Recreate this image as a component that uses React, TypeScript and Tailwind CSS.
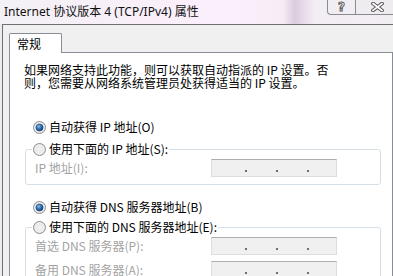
import React from "react";

function Radio({ checked }: { checked?: boolean }) {
  return (
    <svg width="13" height="13" viewBox="0 0 13 13" className="shrink-0">
      <defs>
        <radialGradient id="rbg" cx="0.5" cy="0.5" r="0.6">
          <stop offset="0" stopColor="#f4f4f4" />
          <stop offset="0.6" stopColor="#e6e6e6" />
          <stop offset="1" stopColor="#cfcfcf" />
        </radialGradient>
        <radialGradient id="rdot" cx="0.4" cy="0.35" r="0.7">
          <stop offset="0" stopColor="#8fc2ee" />
          <stop offset="0.5" stopColor="#2f6fb3" />
          <stop offset="1" stopColor="#123c6e" />
        </radialGradient>
      </defs>
      <circle cx="6.5" cy="6.5" r="6" fill="url(#rbg)" stroke="#8e9196" strokeWidth="1" />
      <circle cx="6.5" cy="6.5" r="4.5" fill="none" stroke="#ffffff" strokeOpacity="0.6" strokeWidth="1" />
      {checked && <circle cx="6.5" cy="6.5" r="3.6" fill="url(#rdot)" stroke="#1c4474" strokeWidth="0.6" />}
    </svg>
  );
}

function IpBox({ className = "" }: { className?: string }) {
  return (
    <div
      className={
        "w-[126px] h-[18px] shrink-0 bg-[#f0f0f0] border border-[#dadde2] border-t-[#abadb3] flex items-end pb-[4px] pl-[33px] gap-[29px] " +
        className
      }
    >
      <span className="w-[2px] h-[2px] bg-[#6f6f6f]" />
      <span className="w-[2px] h-[2px] bg-[#6f6f6f]" />
      <span className="w-[2px] h-[2px] bg-[#6f6f6f]" />
    </div>
  );
}

export default function App() {
  return (
    <div className="w-[393px] h-[276px] overflow-hidden bg-[#ecebf0] flex flex-col font-['Noto_Sans','Noto_Sans_CJK_SC',sans-serif]">
      {/* Title bar */}
      <div className="h-[24px] shrink-0 flex items-start bg-[linear-gradient(to_right,#f3f1f5_0%,#f8eff9_30%,#fbeffb_60%,#f6ecf6_72%,#dccbdd_75%,#e6d9e7_77%,#f3edf4_80%,#f1eef2_100%)]">
        <div className="h-[23px] pl-[4px] flex items-center text-[12px] text-[#111] whitespace-nowrap font-['Noto_Sans','Noto_Sans_CJK_SC',sans-serif]">
          Internet 协议版本 4 (TCP/IPv4) 属性
        </div>
        <div className="ml-auto mr-[-5px] flex shrink-0">
          <div className="w-[28px] h-[15px] shrink-0 border border-t-0 border-r-0 border-[#8b8a93] rounded-bl-[4px] bg-[#f0eef2] flex items-center justify-center">
            <span className="text-[12px] leading-[12px] font-bold text-white [-webkit-text-stroke:1px_#5b5b5b] font-['DejaVu_Sans',sans-serif]">
              ?
            </span>
          </div>
          <div className="w-[43px] h-[15px] shrink-0 border-l border-b border-[#8b8a93] bg-[#eeecef] flex items-center justify-center">
            <svg width="13" height="10" viewBox="0 0 13 10">
              <path d="M2 1.5 L11 8.5 M11 1.5 L2 8.5" stroke="#5a5a5a" strokeWidth="3.6" strokeLinecap="square" />
              <path d="M2 1.5 L11 8.5 M11 1.5 L2 8.5" stroke="#ffffff" strokeWidth="1.6" strokeLinecap="square" />
            </svg>
          </div>
        </div>
      </div>

      {/* Body */}
      <div className="flex-1 ml-[2px] border-t border-l border-[#6f6f74] bg-[#f0f0f0] pl-[6px] pt-[8px] flex flex-col font-['Noto_Sans_CJK_SC',sans-serif] text-[12px] text-black">
        {/* Tab */}
        <div className="relative z-10 -mb-px w-[53px] h-[20px] bg-white border border-b-0 border-[#898c95] rounded-t-[2px] flex items-center pl-[7px] leading-[12px]">
          常规
        </div>
        {/* Panel */}
        <div className="flex-1 w-[384px] bg-white border border-[#898c95] flex flex-col">
          <p className="pl-[14px] pt-[10px] leading-[13px] whitespace-nowrap">
            如果网络支持此功能，则可以获取自动指派的 IP 设置。否
            <br />
            则，您需要从网络系统管理员处获得适当的 IP 设置。
          </p>

          <div className="mt-[30px] h-[16px] pl-[23px] flex items-center gap-[3px] leading-[12px]">
            <Radio checked />
            <span>自动获得 IP 地址(O)</span>
          </div>

          <fieldset className="mt-[6px] ml-[15px] w-[356px] border border-[#d5dfe5] rounded-[3px] px-[6px]">
            <legend className="h-[16px] px-[1px] flex items-center gap-[3px] leading-[12px]">
              <Radio />
              <span>使用下面的 IP 地址(S):</span>
            </legend>
            <div className="mt-[2px] mb-[7px] h-[18px] flex items-center">
              <span className="w-[179px] pl-[3px] text-[#a3a3a3] leading-[12px]">IP 地址(I):</span>
              <IpBox />
            </div>
          </fieldset>

          <div className="mt-[14px] h-[16px] pl-[23px] flex items-center gap-[3px] leading-[12px]">
            <Radio checked />
            <span>自动获得 DNS 服务器地址(B)</span>
          </div>

          <fieldset className="mt-[4px] ml-[15px] w-[356px] border border-[#d5dfe5] rounded-[3px] px-[6px]">
            <legend className="h-[16px] px-[1px] flex items-center gap-[3px] leading-[12px]">
              <Radio />
              <span>使用下面的 DNS 服务器地址(E):</span>
            </legend>
            <div className="mt-[2px] h-[18px] flex items-center">
              <span className="w-[179px] pl-[3px] text-[#a3a3a3] leading-[12px]">首选 DNS 服务器(P):</span>
              <IpBox />
            </div>
            <div className="mt-[6px] mb-[7px] h-[18px] flex items-center">
              <span className="w-[179px] pl-[3px] text-[#a3a3a3] leading-[12px]">备用 DNS 服务器(A):</span>
              <IpBox />
            </div>
          </fieldset>
        </div>
      </div>
    </div>
  );
}
